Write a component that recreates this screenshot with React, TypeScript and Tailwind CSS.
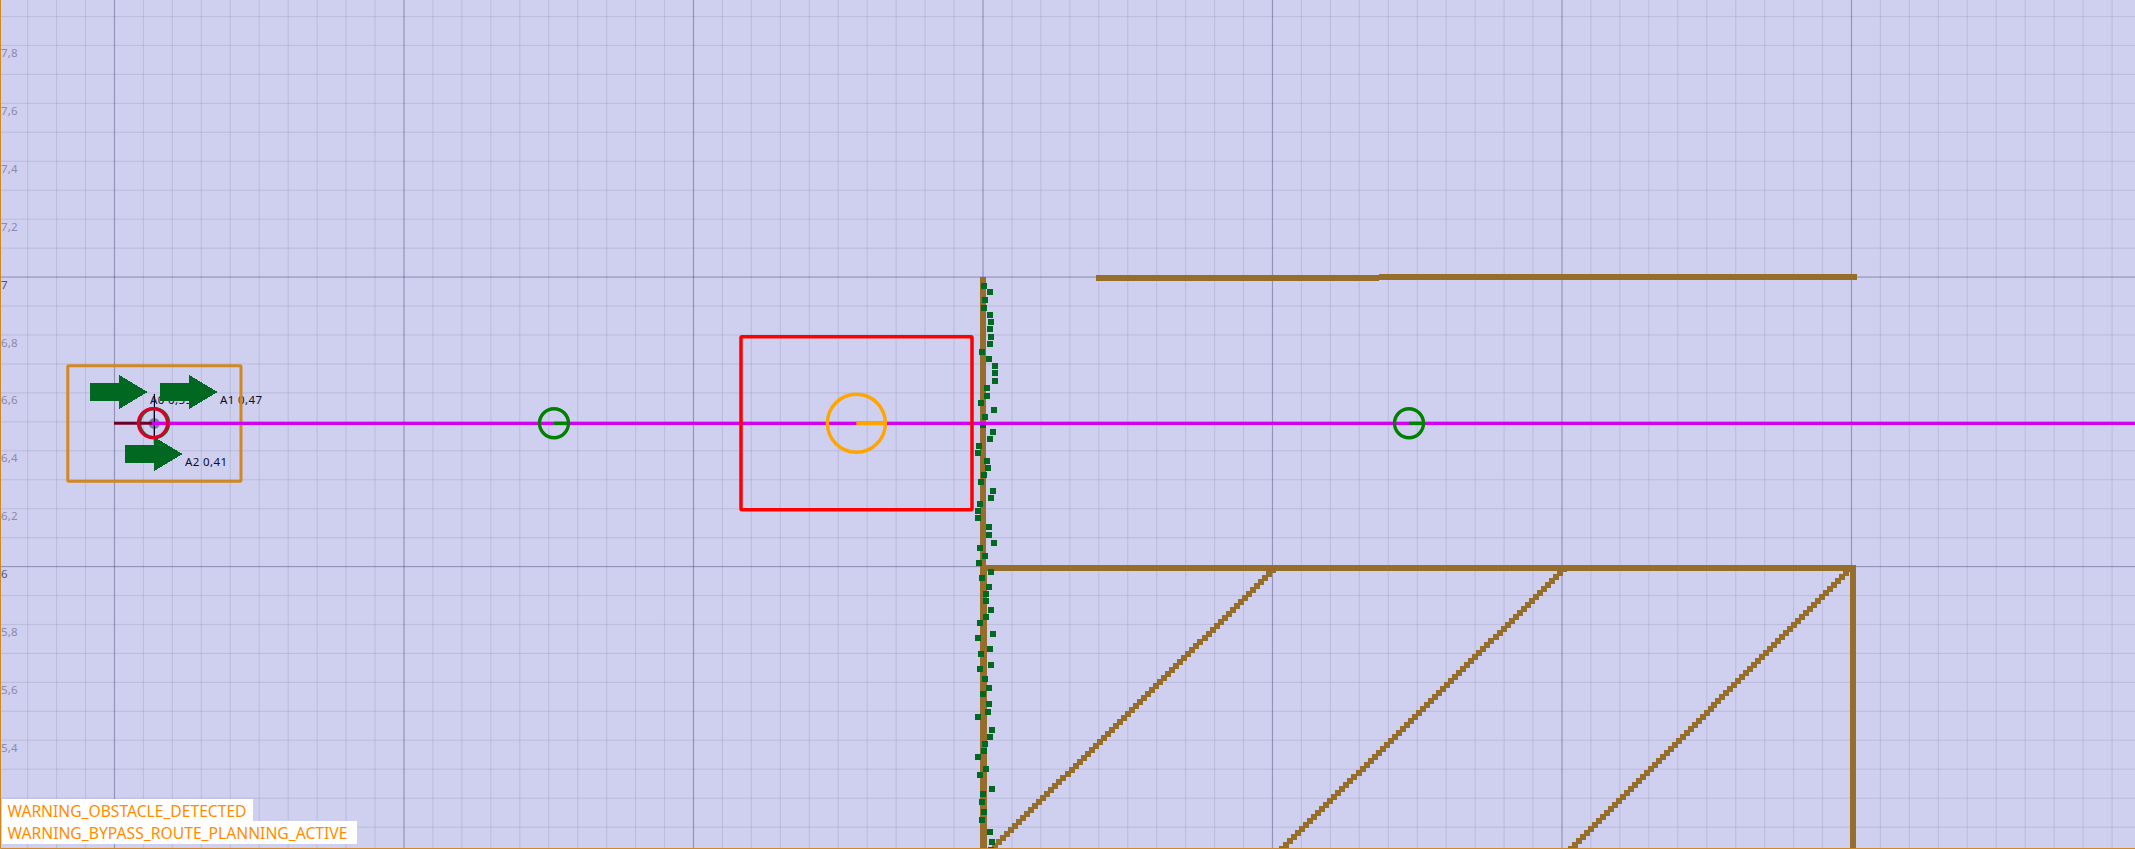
const range = (n: number) => Array.from({ length: n }, (_, i) => i);

const WIDTH = 2135;
const HEIGHT = 849;
const METER = 289.5;
const ORIGIN_X = 114.4;
const SEVEN_Y = 277;

const columns = range(73).map((i) => ({ at: ORIGIN_X + ((i - 3) * METER) / 10, major: (i - 3) % 10 === 0 }));
const rows = range(29).map((i) => ({ at: SEVEN_Y + ((i - 9) * METER) / 10, major: (i - 9) % 10 === 0 }));

const axisLabels = [
  '7,8', '7,6', '7,4', '7,2', '7', '6,8', '6,6', '6,4', '6,2', '6', '5,8', '5,6', '5,4',
];

const scan: [number, number][] = [
  [984, 286], [990, 292], [985, 300], [984, 308], [990, 315], [991, 322], [990, 329], [991, 337],
  [990, 344], [982, 352], [989, 359], [995, 366], [995, 373], [995, 381], [987, 388], [987, 396],
  [981, 403], [994, 410], [985, 417], [983, 425], [993, 432], [990, 439], [979, 446], [978, 453],
  [987, 461], [988, 468], [984, 475], [981, 482], [993, 491], [991, 498], [980, 504], [978, 511],
  [978, 518], [989, 527], [989, 535], [994, 543], [980, 548], [985, 556], [979, 563], [991, 572],
  [982, 578], [989, 587], [986, 594], [986, 601], [991, 610], [986, 617], [980, 623], [993, 634],
  [978, 638], [990, 649], [981, 654], [991, 665], [980, 669], [985, 679], [989, 688], [983, 694],
  [989, 704], [988, 712], [978, 717], [992, 730], [990, 737], [985, 744], [984, 751], [978, 757],
  [986, 769], [980, 775], [992, 789], [983, 794], [982, 802], [984, 812], [982, 820], [990, 832],
  [992, 842], [991, 850],
];

// Top-left corner of the highest cell, then of a cell near the lower edge.
const diagonals = [
  { x: 1270, y: 567, endX: 996, endY: 839 },
  { x: 1561, y: 566, endX: 1283, endY: 842 },
  { x: 1847, y: 566, endX: 1572, endY: 842 },
];

function Grid() {
  return (
    <g>
      {columns.map((c) => (
        <rect key={`c${c.at}`} x={c.at - 0.5} y={0} width={1.15} height={HEIGHT} fill="#000030" fillOpacity={c.major ? 0.29 : 0.085} />
      ))}
      {rows.map((r) => (
        <rect key={`r${r.at}`} x={0} y={r.at - 0.5} width={WIDTH} height={1.15} fill="#000030" fillOpacity={r.major ? 0.29 : 0.085} />
      ))}
    </g>
  );
}

function Walls() {
  return (
    <g fill="#956e2b" shapeRendering="crispEdges">
      <rect x={980} y={277} width={6} height={290} />
      <rect x={980} y={565} width={7} height={284} />
      <rect x={980} y={565} width={876} height={6} />
      <rect x={1850} y={565} width={6} height={284} />
      <rect x={1096} y={275} width={283} height={6} />
      <rect x={1379} y={274} width={478} height={6} />
      {diagonals.map((d) =>
        range(72).map((i) => (
          <rect
            key={`${d.x}-${i}`}
            x={Math.round(d.x - (i * 4 * (d.x - d.endX)) / (d.endY - d.y))}
            y={d.y + i * 4}
            width={6}
            height={6}
          />
        )),
      )}
    </g>
  );
}

function Arrow({ x, y }: { x: number; y: number }) {
  return (
    <path
      d={`M${x} ${y - 9}h29v-8l28.5 17l-28.5 17v-8h-29z`}
      fill="#006820"
      shapeRendering="crispEdges"
    />
  );
}

function Marker({ x, r, color }: { x: number; r: number; color: string }) {
  return (
    <g stroke={color} strokeWidth={3.4} fill="none">
      <circle cx={x} cy={423.2} r={r} />
      <path d={`M${x} 423.4h${r}`} />
    </g>
  );
}

function AnchorLabel({ x, y, text }: { x: number; y: number; text: string }) {
  return (
    <text x={x} y={y} textLength={42} fill="#0c0c28" className="text-[11.5px]">
      {text}
    </text>
  );
}

export default function App() {
  return (
    <main className="grid h-[849px] w-[2135px] overflow-hidden bg-[#cfcfef] font-['Noto_Sans','Open_Sans',sans-serif]">
      <svg className="col-start-1 row-start-1" width={WIDTH} height={HEIGHT} viewBox={`0 0 ${WIDTH} ${HEIGHT}`}>
        <Grid />
        {axisLabels.map((label, i) => (
          <text
            key={label}
            x={1}
            y={57 + i * 57.9}
            textLength={label.length > 1 ? 16.5 : undefined}
            fill={label.length > 1 ? '#8c8bac' : '#56557a'}
            className="text-[11.5px]"
          >
            {label}
          </text>
        ))}

        <AnchorLabel x={150} y={404} text="A0 0,55" />
        <AnchorLabel x={220} y={404} text="A1 0,47" />
        <AnchorLabel x={185} y={466} text="A2 0,41" />

        <Walls />
        <g fill="#006820" shapeRendering="crispEdges">
          {scan.map(([x, y]) => (
            <rect key={`${x}-${y}`} x={x - 3} y={y - 3} width={6} height={6} />
          ))}
        </g>

        <rect x={67.8} y={365.8} width={173.2} height={115.5} rx={1} fill="none" stroke="#d08824" strokeWidth={3} />
        <path d="M154.4 394v50" stroke="#000020" strokeWidth={1.2} />
        <Arrow x={90} y={392} />
        <Arrow x={160} y={392} />
        <Arrow x={125} y={454} />

        <circle cx={154.2} cy={423.2} r={14.5} fill="none" stroke="#107030" strokeWidth={3.2} />
        <circle cx={154.2} cy={423.4} r={5.5} fill="#7c7aa0" />
        <path d="M154.4 408v30" stroke="#000020" strokeWidth={1.2} />
        <path d="M114 423.3h40" stroke="#6c0028" strokeWidth={3} />
        <path d="M152 423.4H2135" stroke="#d000f0" strokeWidth={3} />
        <path d="M154 421.5H2135M154 424.7H2135" stroke="#d000f0" strokeOpacity={0.25} />
        <circle cx={153} cy={423.2} r={14.5} fill="none" stroke="#d80028" strokeWidth={3.3} />

        <Marker x={554} r={14.5} color="#008000" />
        <Marker x={1409} r={14.5} color="#008000" />
        <Marker x={856.4} r={29} color="#ffa500" />
        <rect x={741} y={336.8} width={231} height={173} rx={1} fill="none" stroke="#ff0000" strokeWidth={3.5} />
        <path d="M0.5 0V848.5H2135" fill="none" stroke="#d08824" />
      </svg>

      <section className="z-10 col-start-1 row-start-1 mb-[5px] ml-0.5 flex flex-col items-start self-end justify-self-start text-[16px] text-[#ff8c00]">
        <div className="h-[22px] w-[251px] bg-white pl-[5px]">
          <svg className="block overflow-visible" width={240} height={22}>
            <text x={0.5} y={18} textLength={239} lengthAdjust="spacingAndGlyphs" fill="currentColor">WARNING_OBSTACLE_DETECTED</text>
          </svg>
        </div>
        <div className="h-[23px] w-[355px] bg-white pl-[5px]">
          <svg className="block overflow-visible" width={345} height={22}>
            <text x={0.5} y={18} textLength={340} lengthAdjust="spacingAndGlyphs" fill="currentColor">WARNING_BYPASS_ROUTE_PLANNING_ACTIVE</text>
          </svg>
        </div>
      </section>
    </main>
  );
}
